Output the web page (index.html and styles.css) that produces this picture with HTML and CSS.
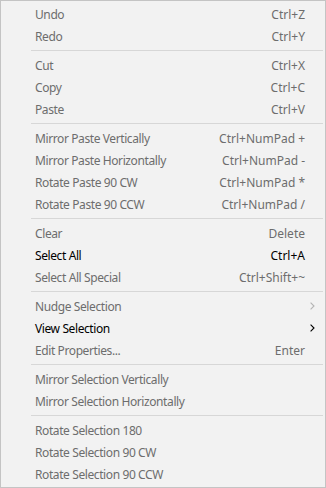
FILE: index.html
```html
<!DOCTYPE html>
<html lang="en">
<head>
  <meta charset="UTF-8">
  <title>Edit menu</title>
  <link rel="stylesheet" href="styles.css">
</head>
<body>

  <div class="menu">
    <div class="item off"><span class="label">Undo</span><span class="key">Ctrl+Z</span></div>
    <div class="item off"><span class="label">Redo</span><span class="key">Ctrl+Y</span></div>
    <div class="sep"></div>
    <div class="item off"><span class="label">Cut</span><span class="key">Ctrl+X</span></div>
    <div class="item off"><span class="label">Copy</span><span class="key">Ctrl+C</span></div>
    <div class="item off"><span class="label">Paste</span><span class="key">Ctrl+V</span></div>
    <div class="sep"></div>
    <div class="item off"><span class="label">Mirror Paste Vertically</span><span class="key">Ctrl+NumPad +</span></div>
    <div class="item off"><span class="label">Mirror Paste Horizontally</span><span class="key">Ctrl+NumPad -</span></div>
    <div class="item off"><span class="label">Rotate Paste 90 CW</span><span class="key">Ctrl+NumPad *</span></div>
    <div class="item off"><span class="label">Rotate Paste 90 CCW</span><span class="key">Ctrl+NumPad /</span></div>
    <div class="sep"></div>
    <div class="item off"><span class="label">Clear</span><span class="key">Delete</span></div>
    <div class="item"><span class="label">Select All</span><span class="key">Ctrl+A</span></div>
    <div class="item off"><span class="label">Select All Special</span><span class="key">Ctrl+Shift+~</span></div>
    <div class="sep"></div>
    <div class="item off">
      <span class="label">Nudge Selection</span><span class="key"></span>
      <svg class="arrow" width="5" height="8" viewBox="0 0 5 8"><polyline points="0.6,0.6 4,4 0.6,7.4" /></svg>
    </div>
    <div class="item">
      <span class="label">View Selection</span><span class="key"></span>
      <svg class="arrow" width="5" height="8" viewBox="0 0 5 8"><polyline points="0.6,0.6 4,4 0.6,7.4" /></svg>
    </div>
    <div class="item off"><span class="label">Edit Properties...</span><span class="key">Enter</span></div>
    <div class="sep"></div>
    <div class="item off"><span class="label">Mirror Selection Vertically</span><span class="key"></span></div>
    <div class="item off"><span class="label">Mirror Selection Horizontally</span><span class="key"></span></div>
    <div class="sep"></div>
    <div class="item off"><span class="label">Rotate Selection 180</span><span class="key"></span></div>
    <div class="item off"><span class="label">Rotate Selection 90 CW</span><span class="key"></span></div>
    <div class="item off"><span class="label">Rotate Selection 90 CCW</span><span class="key"></span></div>
  </div>

</body>
</html>
```

FILE: styles.css
```css
* { box-sizing: border-box; margin: 0; padding: 0; }

body {
  font-family: 'Noto Sans', sans-serif;
  font-size: 12px;
  background: #f2f2f2;
}

.menu {
  width: 326px;
  height: 488px;
  background: #f2f2f2;
  border: 1px solid #c4c4c4;
  padding: 2px 0 1px 0;
}

.item {
  display: grid;
  grid-template-columns: 1fr auto 20px;
  align-items: center;
  height: 22px;
  padding-left: 34px;
  color: #000;
  white-space: nowrap;
}

.item .label {
  letter-spacing: -0.4px;
}

.item.off {
  color: #6d6d6d;
}

.item .arrow {
  margin-left: 5px;
  fill: none;
  stroke: #000;
  stroke-width: 1.1;
}

.item.off .arrow {
  stroke: #b4b4b4;
}

.sep {
  height: 1px;
  background: #d7d7d7;
  margin: 3px 2px 3px 30px;
}
```
